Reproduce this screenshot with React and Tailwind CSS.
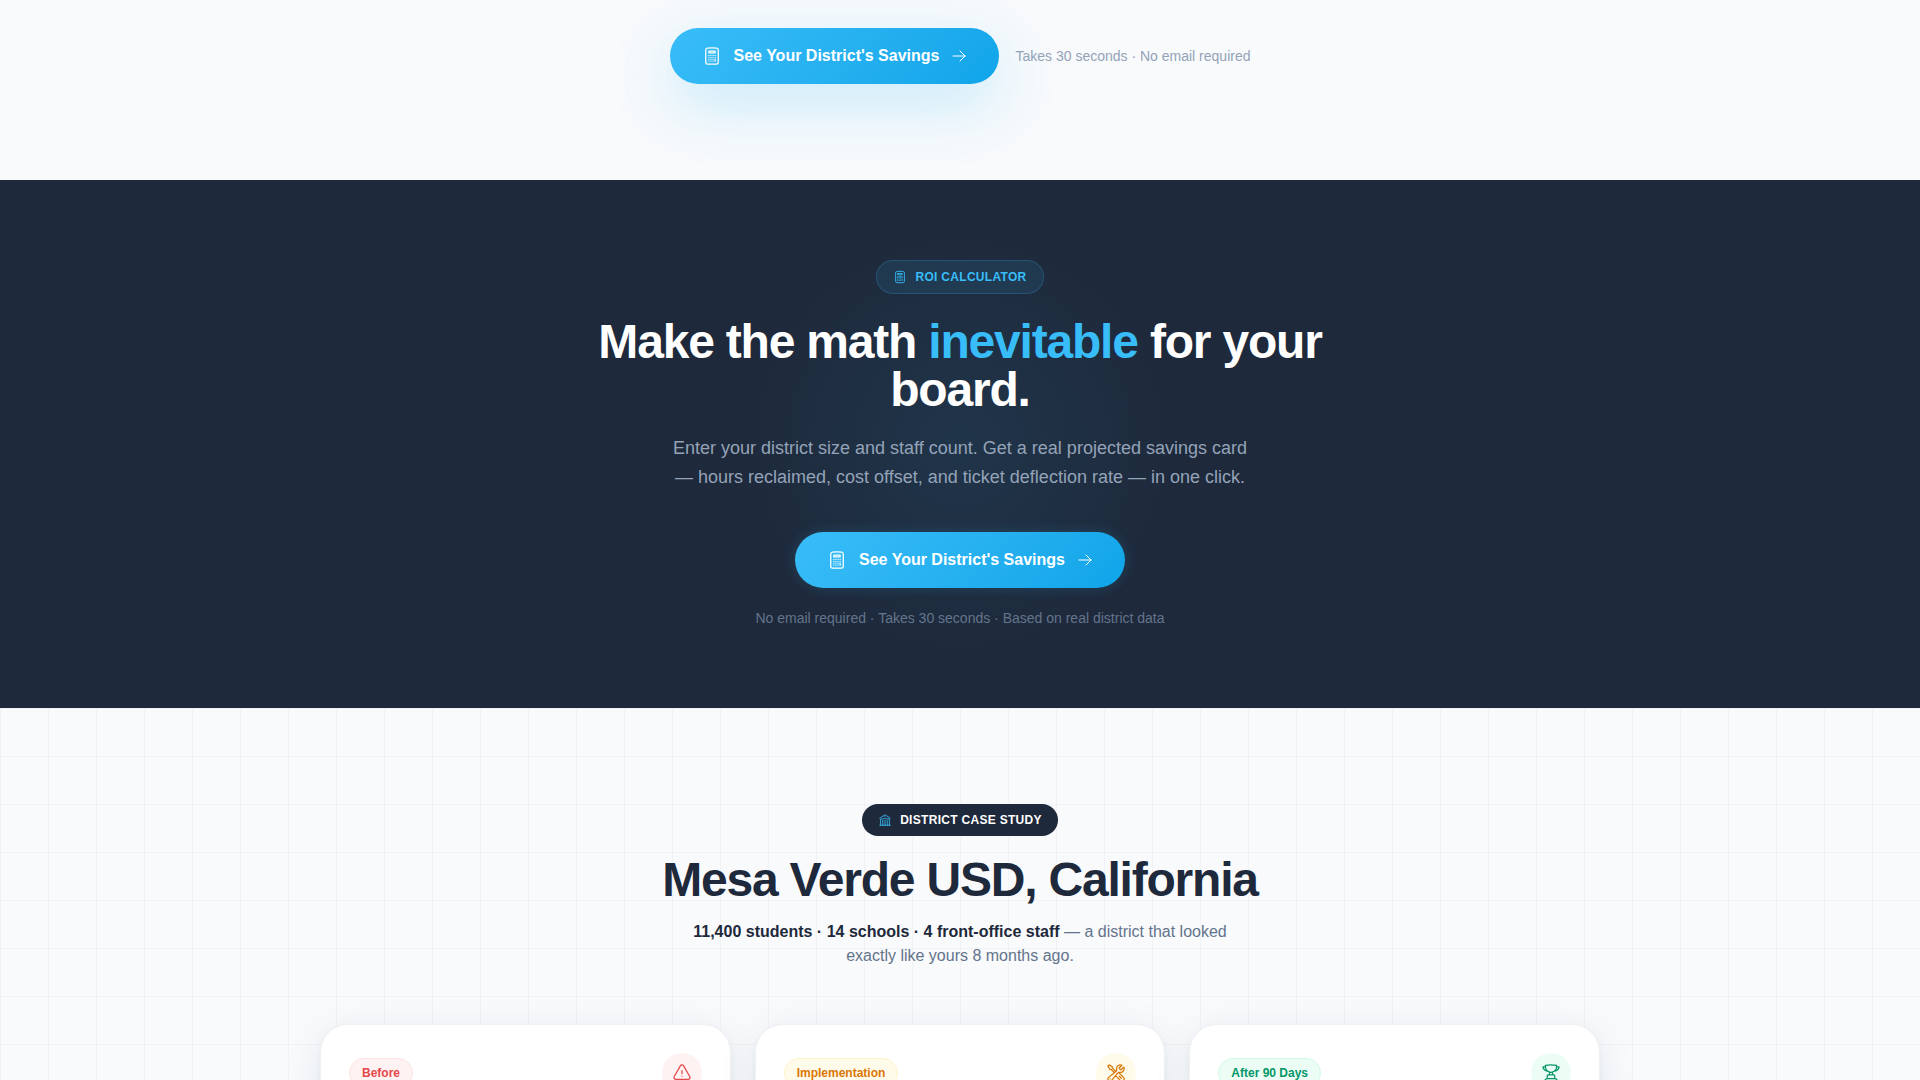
import {
  HiOutlineArrowRight,
  HiOutlineBuildingLibrary,
  HiOutlineCalculator,
  HiOutlineExclamationTriangle,
  HiOutlineTrophy,
  HiOutlineWrenchScrewdriver,
} from 'react-icons/hi2'

const phases = [
  {
    label: 'Before',
    icon: HiOutlineExclamationTriangle,
    badge: 'bg-[#fef2f2] border-[#fee2e2] text-[#e5484a]',
    circle: 'bg-[#fef2f2] text-[#e5484a]',
  },
  {
    label: 'Implementation',
    icon: HiOutlineWrenchScrewdriver,
    badge: 'bg-[#fffbeb] border-[#fef3c7] text-[#d97706]',
    circle: 'bg-[#fffbeb] text-[#d97706]',
  },
  {
    label: 'After 90 Days',
    icon: HiOutlineTrophy,
    badge: 'bg-[#ecfdf5] border-[#d1fae5] text-[#059669]',
    circle: 'bg-[#ecfdf5] text-[#059669]',
  },
]

function SavingsButton({ glow }) {
  return (
    <button
      type="button"
      className={`inline-flex items-center gap-3 rounded-full bg-linear-135 from-[#38bdf8] to-[#0ea5e9] px-8 py-4 text-base font-bold text-white ${glow}`}
    >
      <HiOutlineCalculator className="w-5 h-5" />
      See Your District's Savings
      <HiOutlineArrowRight className="w-4 h-4" />
    </button>
  )
}

function PhaseCard({ label, icon: Icon, badge, circle }) {
  return (
    <article className="min-h-96 rounded-[28px] border border-[#eff1f3] bg-white p-7 shadow-[0_2px_6px_rgba(30,41,59,0.04),0_8px_40px_rgba(30,41,59,0.08)]">
      <div className="flex items-center justify-between">
        <span className={`rounded-full border px-3 py-1.5 text-xs font-bold ${badge}`}>{label}</span>
        <span className={`flex h-10 w-10 items-center justify-center rounded-full ${circle}`}>
          <Icon className="w-5 h-5" />
        </span>
      </div>
    </article>
  )
}

export default function App() {
  return (
    <main className="h-screen overflow-hidden bg-[#f8fafc] font-['Liberation_Sans',sans-serif] text-[#1e293b]">
      <section className="flex flex-wrap items-center justify-center gap-4 px-6 pt-7 pb-24">
        <SavingsButton glow="shadow-[0_20px_60px_rgba(56,189,248,0.25)]" />
        <p className="text-sm text-[#94a3b8]">Takes 30 seconds · No email required</p>
      </section>

      <section className="flex flex-col items-center bg-[#1e293b] bg-[radial-gradient(circle_230px_at_center,rgba(56,189,248,0.08),transparent)] px-6 py-20 text-center">
        <span className="inline-flex items-center gap-2 rounded-full border border-[#38bdf8]/20 bg-[#38bdf8]/10 px-4 py-2 text-xs font-bold tracking-wide text-[#38bdf8] uppercase">
          <HiOutlineCalculator className="w-3.5 h-3.5" />
          ROI Calculator
        </span>
        <h2 className="mt-6 max-w-3xl text-5xl leading-none font-bold tracking-tight text-white">
          Make the math <span className="text-[#38bdf8]">inevitable</span> for your board.
        </h2>
        <p className="mt-5 mb-10 max-w-xl text-lg leading-[29px] text-[#94a3b8]">
          Enter your district size and staff count. Get a real projected savings card — hours reclaimed, cost offset,
          and ticket deflection rate — in one click.
        </p>
        <SavingsButton glow="shadow-[0_0_12px_2px_rgba(56,189,248,0.12)]" />
        <p className="mt-5 text-sm text-[#64748b]">No email required · Takes 30 seconds · Based on real district data</p>
      </section>

      <section className="bg-[linear-gradient(to_right,rgba(30,41,59,0.03)_1px,transparent_1px),linear-gradient(to_bottom,rgba(30,41,59,0.03)_1px,transparent_1px)] bg-size-[48px_48px] px-6 py-24">
        <header className="flex flex-col items-center text-center">
          <span className="inline-flex items-center gap-2 rounded-full bg-[#1e293b] px-4 py-2 text-xs font-bold tracking-wide text-white uppercase">
            <HiOutlineBuildingLibrary className="w-3.5 h-3.5 text-[#38bdf8]" />
            District Case Study
          </span>
          <h2 className="mt-5 text-5xl leading-none font-bold tracking-tight">Mesa Verde USD, California</h2>
          <p className="mt-4 max-w-xl text-base text-[#64748b]">
            <strong className="text-[#1e293b]">11,400 students · 14 schools · 4 front-office staff</strong> — a district
            that looked exactly like yours 8 months ago.
          </p>
        </header>
        <div className="mx-auto mt-14 grid max-w-7xl gap-6 md:grid-cols-3">
          {phases.map((phase) => (
            <PhaseCard key={phase.label} {...phase} />
          ))}
        </div>
      </section>
    </main>
  )
}
